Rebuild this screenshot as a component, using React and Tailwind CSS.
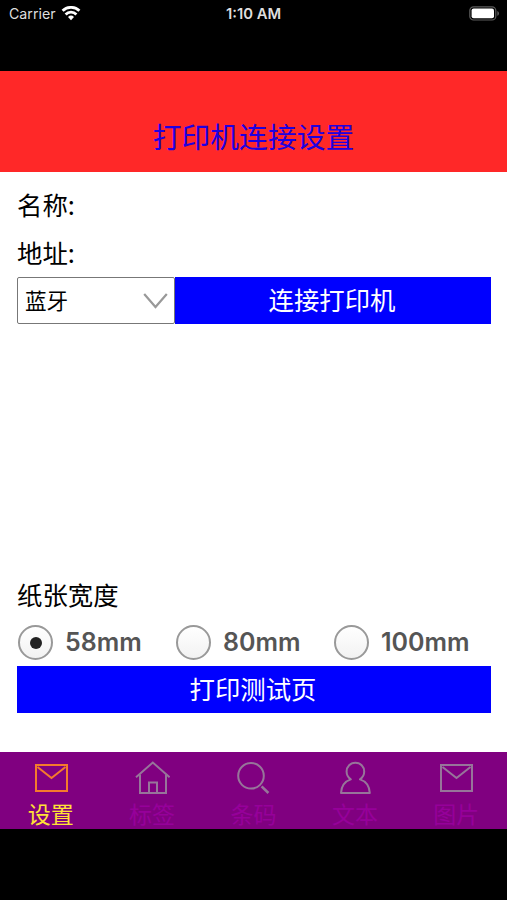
import React, { useState } from 'react';

const MailIcon = () => (
  <svg className="w-[36px] h-[36px]" viewBox="0 0 36 36" fill="none" stroke="currentColor" strokeWidth="2">
    <rect x="3" y="5" width="31" height="26" />
    <path d="M4.5 7 L18.5 18 L32.5 7" />
  </svg>
);

const HomeIcon = () => (
  <svg className="w-[36px] h-[36px]" viewBox="0 0 36 36" fill="none" stroke="currentColor" strokeWidth="2">
    <path d="M2 17.2 L18.8 2.6 L35.6 17.2" />
    <path d="M6 14.4 V33 H32 V14.4" />
    <path d="M15 33 V22.4 H23 V33" />
  </svg>
);

const SearchIcon = () => (
  <svg className="w-[36px] h-[36px]" viewBox="0 0 36 36" fill="none" stroke="currentColor" strokeWidth="2">
    <circle cx="16" cy="15.8" r="12.8" />
    <path d="M26.6 26.4 L33.4 33" strokeWidth="2.6" />
  </svg>
);

const PersonIcon = () => (
  <svg className="w-[36px] h-[36px]" viewBox="0 0 36 36" fill="none" stroke="currentColor" strokeWidth="2" strokeLinejoin="round">
    <path d="M13.8 19.4 C11 17.6 9.6 14.8 9.6 11.6 C9.6 6.4 13.4 2.7 18.4 2.7 C23.4 2.7 27.2 6.4 27.2 11.6 C27.2 14.8 25.8 17.6 23 19.4 C28.4 21.2 32.4 25.4 32.8 33 H4 C4.4 25.4 8.4 21.2 13.8 19.4 Z" />
  </svg>
);

const WifiIcon = () => (
  <svg className="w-[20px] h-[15px]" viewBox="0 0 20 15" fill="none" stroke="white" strokeWidth="2.8">
    <path d="M1.6 4.8 A12 12 0 0 1 18.4 4.8" />
    <path d="M4.6 8.4 A7.6 7.6 0 0 1 15.4 8.4" />
    <path d="M10 14.2 L7 11 A4.3 4.3 0 0 1 13 11 Z" fill="white" stroke="none" />
  </svg>
);

const BatteryIcon = () => (
  <svg className="w-[31px] h-[15px]" viewBox="0 0 31 15" fill="none">
    <rect x="0.8" y="0.8" width="26" height="13.2" rx="3.8" stroke="#5c5c5c" strokeWidth="1.2" />
    <rect x="2.6" y="2.6" width="22.4" height="9.6" rx="2" fill="white" />
    <path d="M28.3 5 C30.6 5.8 30.6 9 28.3 9.8 Z" fill="#5c5c5c" />
  </svg>
);

const tabs = [
  { id: 'settings', label: '设置', icon: MailIcon },
  { id: 'label', label: '标签', icon: HomeIcon },
  { id: 'barcode', label: '条码', icon: SearchIcon },
  { id: 'text', label: '文本', icon: PersonIcon },
  { id: 'image', label: '图片', icon: MailIcon },
];

const widths = ['58mm', '80mm', '100mm'];

const StatusBar = () => (
  <div className="h-[71px] shrink-0 bg-black text-[#dedede] font-['Inter','Noto_Sans_CJK_SC',sans-serif]">
    <div className="grid grid-cols-3 items-center h-[27px] pl-[9px] pr-[7px]">
      <div className="flex items-center gap-[5px] text-[14.2px]">
        <span>Carrier</span>
        <WifiIcon />
      </div>
      <div className="pt-[2px] pr-[2px] text-center text-[14.8px] font-semibold whitespace-nowrap">1:10 AM</div>
      <div className="flex justify-end">
        <BatteryIcon />
      </div>
    </div>
  </div>
);

export default function App() {
  const [activeTab, setActiveTab] = useState('settings');
  const [paperWidth, setPaperWidth] = useState('58mm');

  return (
    <div className="flex flex-col w-full h-[900px] overflow-hidden bg-black font-['Noto_Sans_CJK_SC',sans-serif]">
      <StatusBar />

      <header className="h-[101px] shrink-0 bg-[#ff2828] flex items-end justify-center pb-[15px]">
        <h1 className="text-[28.8px] leading-[42px] text-[#2000e0]">打印机连接设置</h1>
      </header>

      <main className="h-[580px] shrink-0 bg-white flex flex-col pl-[17px] pr-4 text-[25.4px] text-black">
        <div className="h-[57px] pt-[9px] leading-[47px]">名称:</div>
        <div className="h-[48px] leading-[47px]">地址:</div>
        <div className="flex h-[47px]">
          <button className="w-[158px] flex items-center justify-between border border-[#777] rounded-[2px] pl-[7px] pr-[6px] text-[21.6px]">
            <span>蓝牙</span>
            <svg className="w-[25px] h-[16px]" viewBox="0 0 25 16" fill="none" stroke="#999" strokeWidth="2.2">
              <path d="M1.2 1 L12.5 14 L23.8 1" />
            </svg>
          </button>
          <button className="flex-1 pr-[2px] pb-[2px] bg-[#0000ff] text-white">连接打印机</button>
        </div>

        <div className="mt-auto h-[47px] leading-[45px]">纸张宽度</div>
        <div className="grid grid-cols-3 h-[47px]">
          {widths.map((w) => (
            <label key={w} className="flex items-center gap-3 pl-px">
              <input
                type="radio"
                name="paperWidth"
                className="sr-only"
                checked={paperWidth === w}
                onChange={() => setPaperWidth(w)}
              />
              <span className="w-[35px] h-[35px] shrink-0 rounded-full border-2 border-[#999] bg-linear-to-b from-white to-[#f2f2f2] flex items-center justify-center">
                {paperWidth === w && <span className="w-3 h-3 rounded-full bg-[#222]" />}
              </span>
              <span className="font-['Inter',sans-serif] text-[25px] font-semibold text-[#555]">{w}</span>
            </label>
          ))}
        </div>
        <button className="h-[47px] shrink-0 mb-[39px] pb-[2px] pr-[2px] bg-[#0000ff] text-white">打印测试页</button>
      </main>

      <nav className="h-[77px] shrink-0 bg-[#800080] grid grid-cols-5">
        {tabs.map(({ id, label, icon: Icon }) => (
          <button
            key={id}
            onClick={() => setActiveTab(id)}
            className="flex flex-col items-center h-[77px] pt-[8px]"
          >
            <span className={`h-[36px] ${activeTab === id ? 'text-[#f57a2c]' : 'text-[#97759a]'}`}>
              <Icon />
            </span>
            <span className={`text-[23px] leading-[33px] pt-px ${activeTab === id ? 'text-[#ffe135]' : 'text-[#96009a]'}`}>
              {label}
            </span>
          </button>
        ))}
      </nav>
    </div>
  );
}
